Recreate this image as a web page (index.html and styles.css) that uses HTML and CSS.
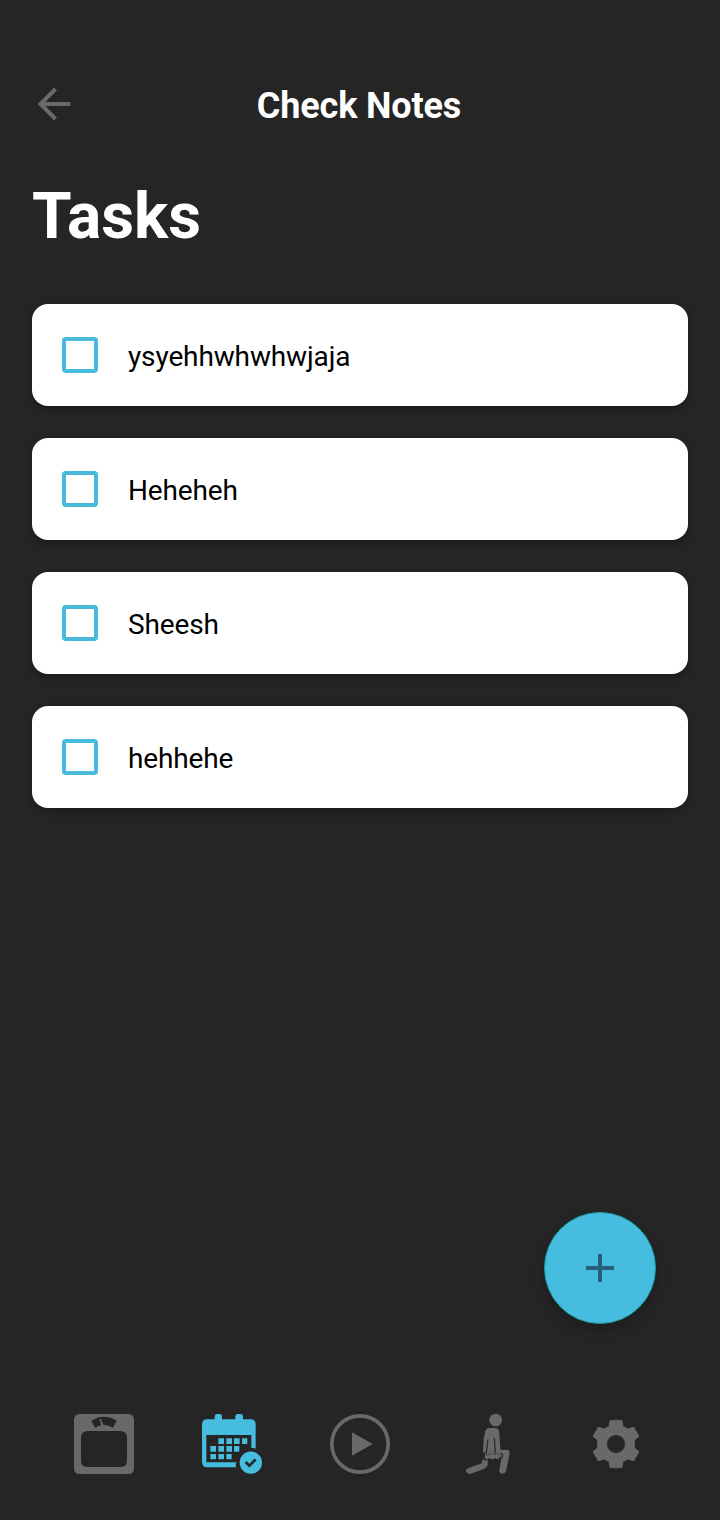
FILE: index.html
```html
<!DOCTYPE html>
<html lang="en">
<head>
<meta charset="utf-8">
<title>Check Notes</title>
<link rel="stylesheet" href="styles.css">
</head>
<body>
<div class="screen">
  <header class="topbar">
    <svg class="back" viewBox="0 0 48 48"><path d="M40.5 24H10.500M25.500 9L10.500 24L25.500 39"/></svg>
    <div class="title">Check Notes</div>
  </header>
  <main class="content">
    <h1 class="heading">Tasks</h1>
    <ul class="tasks">
      <li class="task"><span class="checkbox"></span><span class="label">ysyehhwhwhwjaja</span></li>
      <li class="task"><span class="checkbox"></span><span class="label">Heheheh</span></li>
      <li class="task"><span class="checkbox"></span><span class="label">Sheesh</span></li>
      <li class="task"><span class="checkbox"></span><span class="label">hehhehe</span></li>
    </ul>
  </main>
  <div class="fab"><svg viewBox="0 0 28 28"><path d="M14 0V28M0 14H28"/></svg></div>
  <nav class="tabs">
    <svg class="tab" viewBox="36 36 192 192">
      <path fill-rule="evenodd" d="M60 42H204Q222 42 222 60V204Q222 222 204 222H60Q42 222 42 204V60Q42 42 60 42ZM83 93Q63 93 63 113V183Q63 201 83 201H180Q201 201 201 183V113Q201 93 180 93ZM94 63L105 83Q118 75 131 75Q146 75 159 83L170 62Q152 50 132 50Q111 50 94 63Z"/>
      <path d="M118 57L122 57L133 79H124Z"/>
    </svg>
    <svg class="tab active" viewBox="30 36 192 192">
      <path fill-rule="evenodd" d="M52 58H74V49Q74 42 81 42H89Q96 42 96 49V58H136V49Q136 42 143 42H152Q159 42 159 49V58H182Q197 58 197 73V146Q190 143 184 143V105H49V187H139Q136 195 138 202H52Q36 202 36 186V74Q36 58 52 58Z"/>
      <path d="M85 115h17v17h-17zM109 115h17v17h-17zM132 115h17v17h-17zM156 115h16v17h-16zM61 138h17v17h-17zM85 138h17v17h-17zM109 138h17v17h-17zM132 138h16v17h-16zM61 162h17v16h-17zM85 162h17v16h-17zM109 162h16v16h-16z"/>
      <circle cx="182.500" cy="188" r="33.500"/>
      <path class="check" d="M167 186L178 197L197 178"/>
    </svg>
    <svg class="tab" viewBox="24 36 192 192">
      <circle class="ring" cx="120" cy="132" r="84.5"/>
      <path d="M96 97L158 132L96 167Z"/>
    </svg>
    <svg class="tab" viewBox="18 36 192 192">
      <circle cx="137" cy="60" r="19"/>
      <path d="M118 84H135Q147 84 148 98L151 149H170Q180 149 179 160L168 214Q165 222 156 221Q147 220 148 211L155 171H112L99 157L101 118L105 98Q107 84 118 84Z"/>
      <path d="M98 178Q107 184 113 179V194Q112 203 103 206L62 221Q51 223 48 214Q47 207 57 203L96 190Z"/>
      <path class="gap" d="M114 118L109 160M133 114L136 160M101 160L106 157M151 158L158 165L156 174"/>
      <path class="dumbbell" d="M111 164H122L124 160H130L132 164H137Q139 160 144 162Q151 164 149 172Q147 179 140 177L137 175H132Q130 180 125 178L119 175L114 177Q106 179 104 172Q103 163 111 164Z"/>
    </svg>
    <svg class="tab" viewBox="12 36 192 192">
      <path class="gear" fill-rule="evenodd" d="M91 61H126L129 79Q137 82 144 87L161 81L177 109L163 121Q165 132 163 143L177 155L161 183L144 177Q137 182 129 185L126 203H90L87 185Q79 182 72 177L55 183L39 155L53 143Q51 132 53 121L39 109L55 81L72 87Q79 82 87 79L90 61ZM108 104A28 28 0 1 0 108 160A28 28 0 1 0 108 104Z"/>
    </svg>
  </nav>
</div>
</body>
</html>
```
FILE: styles.css
```css
* { box-sizing: border-box; }
body { margin: 0; background: #252525; font-family: Roboto, "Liberation Sans", sans-serif; }
.screen { height: 1520px; display: flex; flex-direction: column; padding-top: 48px; }
.topbar { height: 112px; display: grid; grid-template-columns: 80px 1fr 80px; align-items: center; padding: 0 30px; flex: none; }
.back { width: 48px; height: 48px; fill: none; stroke: #696969; stroke-width: 4; }
.title { text-align: center; color: #fff; font-size: 36px; font-weight: 700; line-height: 42px; padding: 4px 2px 0 0; letter-spacing: -.14px; }
.content { padding: 18px 32px 0; flex: 1; }
.heading { margin: 0 0 48px; color: #fff; font-size: 64px; line-height: 78px; font-weight: 700; }
.tasks { list-style: none; margin: 0; padding: 0; display: flex; flex-direction: column; gap: 32px; }
.task { height: 102px; display: flex; align-items: center; gap: 30px; padding: 0 30px; background: #fff; border-radius: 16px; box-shadow: 0 3px 7px rgba(0, 0, 0, .3); }
.checkbox { width: 36px; height: 36px; border: 4px solid #48bbdc; border-radius: 4px; }
.label { color: #000; font-size: 28px; line-height: 36px; padding-top: 3px; letter-spacing: -.13px; }
.fab { flex: none; align-self: flex-end; width: 112px; height: 112px; margin: 0 64px 76px 0; display: flex; align-items: center; justify-content: center; border-radius: 50%; background: #46bcdf; border: 1px solid #159da0; box-shadow: 0 6px 12px rgba(0, 0, 0, .2); }
.fab svg { width: 28px; height: 28px; fill: none; stroke: #265f78; stroke-width: 4; }
.tabs { flex: none; height: 120px; padding: 12px 40px 0; display: grid; grid-template-columns: repeat(5, 1fr); justify-items: center; }
.tab { width: 64px; height: 64px; fill: #696969; }
.active { fill: #46bcdf; }
.check { fill: none; stroke: #252525; stroke-width: 8; }
.ring { fill: none; stroke: #696969; stroke-width: 11; }
.gap { fill: none; stroke: #252525; stroke-width: 3.5; }
.dumbbell { stroke: #252525; stroke-width: 3; paint-order: stroke; }
.gear { stroke: #696969; stroke-width: 2; stroke-linejoin: round; }
```
